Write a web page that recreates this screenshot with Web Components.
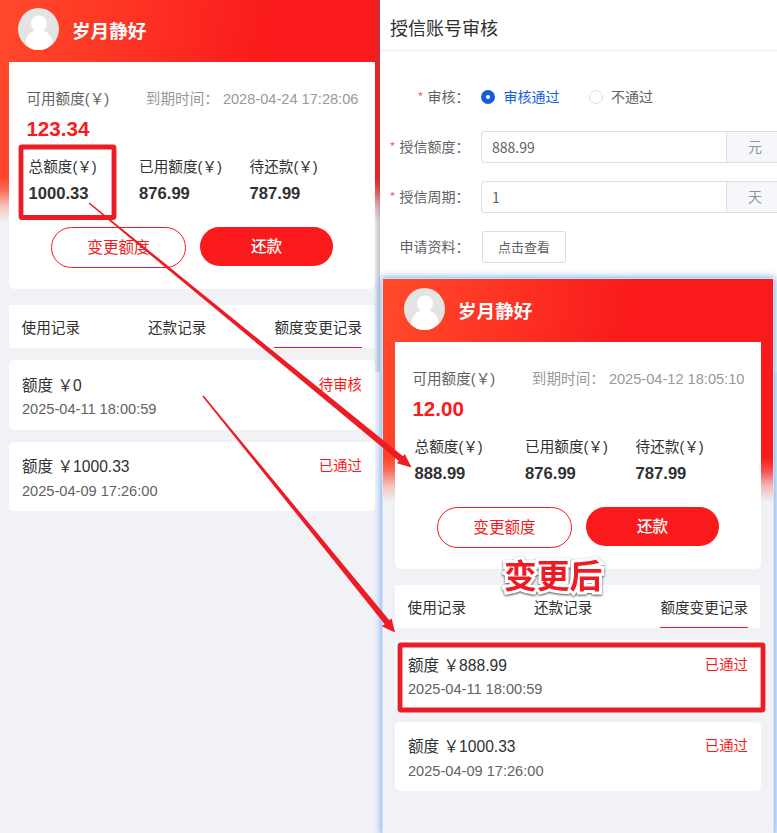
<!DOCTYPE html>
<html lang="zh-CN">
<head>
<meta charset="utf-8">
<title>授信账号审核</title>
<style>
body{margin:0;width:777px;height:833px;overflow:hidden;position:relative;background:#fff;font-family:"Liberation Sans","Noto Sans CJK SC",sans-serif}
</style>
</head>
<body>
<compare-board>
  <credit-phone slot="before" name="岁月静好" available="123.34" expires="2028-04-24 17:28:06" total="1000.33" used="876.99" due="787.99">
    <credit-record latest amount="0" date="2025-04-11 18:00:59" status="待审核"></credit-record>
    <credit-record amount="1000.33" date="2025-04-09 17:26:00" status="已通过"></credit-record>
  </credit-phone>
  <audit-form slot="form">
    <form-row required label="审核&#65306;"><radio-option checked>审核通过</radio-option><radio-option>不通过</radio-option></form-row>
    <form-row required label="授信额度&#65306;"><unit-input unit="元">888.99</unit-input></form-row>
    <form-row required label="授信周期&#65306;"><unit-input unit="天">1</unit-input></form-row>
    <form-row label="申请资料&#65306;"><view-button>点击查看</view-button></form-row>
  </audit-form>
  <credit-phone slot="after" name="岁月静好" available="12.00" expires="2025-04-12 18:05:10" total="888.99" used="876.99" due="787.99">
    <credit-record latest amount="888.99" date="2025-04-11 18:00:59" status="已通过"></credit-record>
    <credit-record amount="1000.33" date="2025-04-09 17:26:00" status="已通过"></credit-record>
  </credit-phone>
</compare-board>
<change-notes>变更后</change-notes>
<script>
const define = (tag, render) => customElements.define(tag, class extends HTMLElement {
  connectedCallback() {
    if (this.shadowRoot) return;
    this.attachShadow({mode: 'open'}).innerHTML = render(n => this.getAttribute(n) || '', this);
  }
});

define('compare-board', () => `<style>
:host{display:block;position:relative;width:777px;height:833px;overflow:hidden}
.base{display:grid;grid-template-columns:380px 397px;height:833px}
.left{overflow:hidden;background:#f1f2f6;position:relative}
.left ::slotted(*){margin:-1px 0 0 -3px}
.shade{position:absolute;right:0;top:0;width:6px;height:372px;background:linear-gradient(90deg,transparent,rgba(90,96,110,.32))}
.right{background:linear-gradient(#fff 0 372px,#e6f1fd 372px)}
.window{position:absolute;left:383px;top:279px;width:390px;height:554px;box-shadow:0 0 0 1px #dce3ee,0 0 7px 2px #75adf5}
</style>
<div class="base"><div class="left"><slot name="before"></slot><div class="shade"></div></div><div class="right"><slot name="form"></slot></div></div>
<div class="window"><slot name="after"></slot></div>`);

define('credit-phone', a => `<style>
:host{display:block;box-sizing:border-box;width:390px;height:834px;padding:0 12px;color:#303133;
background:linear-gradient(180deg,transparent 0 178px,rgba(241,242,246,.22) 191px,rgba(241,242,246,.7) 206px,#f1f2f6 223px),linear-gradient(100deg,#ff4a2a 0,#ff4028 12%,#fa1a1b 52%,#fa1a1b 100%)}
:host([slot=after]){height:554px}
header{display:flex;align-items:flex-start;height:63px;padding-left:9px;gap:13px;color:#fff;font-size:18.6px;font-weight:700;line-height:28px;box-sizing:border-box}
header svg{margin-top:9px;flex:none}
header span{margin-top:19px}
.card{background:#fff;height:227px;border-radius:0 0 6px 6px;font-size:14.6px;box-sizing:border-box;padding-top:27px;line-height:20px}
.top{display:flex;justify-content:space-between;padding:0 16.6px 0 17.4px;color:#606266}
.top span+span{color:#999}
.avail{font-size:20.6px;font-weight:700;color:#fa1a1b;line-height:24px;margin:8px 0 0 17.4px}
.stats{display:grid;grid-template-columns:110.5px 110.5px 1fr;padding-left:19.6px;margin-top:16px;line-height:20px}
.stats b{display:block;font-size:16.6px;line-height:24px;margin-top:5px}
.actions{display:flex;gap:14px;align-items:flex-start;margin:21px 0 0 42px;font-size:15.6px}
.actions div{box-sizing:border-box;text-align:center;border-radius:21px}
.line{width:135px;height:41px;border:1px solid #f21c20;color:#f21c20;line-height:39px}
.fill{width:133px;height:39px;background:#fa1a1b;color:#fff;line-height:39px;font-weight:500}
nav{display:flex;justify-content:space-between;width:365px;box-sizing:border-box;height:43px;background:#fff;margin:16px 0 12px;padding:0 12px 0 12.6px;font-size:14.6px;line-height:46px}
nav span{box-sizing:border-box;height:43px}
nav span:last-child{border-bottom:1px solid #f21c20}
.list{display:flex;flex-direction:column;gap:12px}
</style>
<header><svg width="41" height="42" viewBox="0 0 41 42"><defs><clipPath id="c"><ellipse cx="20.5" cy="21" rx="20.5" ry="21"/></clipPath></defs><g clip-path="url(#c)"><rect width="41" height="42" fill="#e4e4e4"/><circle cx="21" cy="15.5" r="8" fill="#fff"/><path d="M7 42V36C8 27.5 13 22 21 22s13 5.500 14 14v6z" fill="#fff"/></g></svg><span>${a('name')}</span></header>
<div class="card">
<div class="top"><span>可用额度(&#65509;)</span><span>到期时间&#65306; ${a('expires')}</span></div>
<div class="avail">${a('available')}</div>
<div class="stats"><div>总额度(&#65509;)<b>${a('total')}</b></div><div>已用额度(&#65509;)<b>${a('used')}</b></div><div>待还款(&#65509;)<b>${a('due')}</b></div></div>
<div class="actions"><div class="line">变更额度</div><div class="fill">还款</div></div>
</div>
<nav><span>使用记录</span><span>还款记录</span><span>额度变更记录</span></nav>
<div class="list"><slot></slot></div>`);

define('credit-record', a => `<style>
:host{display:flex;justify-content:space-between;box-sizing:border-box;height:69px;background:#fff;border-radius:5px;padding:12px 13px 0;color:#303133}
:host([latest]){height:70px;padding-top:14px}
.t{font-size:15.6px;line-height:25px}
:host([latest]) .t{line-height:23px}
.d{font-size:14.6px;line-height:24px;color:#606266}
.s{font-size:14.4px;line-height:24px;color:#fa1a1b}
:host([latest]) .s{line-height:23px}
</style><div><div class="t">额度 &#65509;${a('amount')}</div><div class="d">${a('date')}</div></div><div class="s">${a('status')}</div>`);

define('audit-form', () => `<style>
:host{display:block;font:14px "Noto Sans CJK SC",sans-serif;color:#606266}
h1{margin:0;height:51px;box-sizing:border-box;border-bottom:1px solid #ececec;padding-left:10px;font-size:18px;font-weight:400;line-height:54px;color:#303133}
.rows{display:grid;gap:18px;padding-top:30px}
</style><h1>授信账号审核</h1><div class="rows"><slot></slot></div>`);

define('form-row', (a, el) => `<style>
:host{display:flex;height:32px;align-items:center}
.l{width:89.500px;text-align:right;margin-right:11.500px;line-height:30px;height:32px;white-space:nowrap;flex:none}
i{font-style:normal;color:#f56c6c;margin-right:4px;font-size:13px}
</style><div class="l">${el.hasAttribute('required') ? '<i>*</i>' : ''}${a('label')}</div><slot></slot>`);

define('radio-option', () => `<style>
:host{display:flex;align-items:center;margin-right:29px;height:32px}
:host([checked]){color:#165dda}
b{width:14px;height:14px;box-sizing:border-box;border:1px solid #dcdfe6;border-radius:50%;margin-right:8.500px}
:host([checked]) b{border:5px solid #165dda}
span{height:32px;line-height:30px}
</style><b></b><span><slot></slot></span>`);

define('unit-input', a => `<style>
:host{display:flex;width:296px;height:32px;box-sizing:border-box;border:1px solid #dcdfe6;border-right:0;border-radius:4px 0 0 4px;line-height:30px}
.v{flex:none;box-sizing:border-box;width:244px;padding-left:10px}
.u{flex:1;box-sizing:border-box;border-left:1px solid #dcdfe6;background:#f5f7fa;padding-left:21px;color:#909399;line-height:29px}
</style><div class="v"><slot></slot></div><div class="u">${a('unit')}</div>`);

define('view-button', () => `<style>
:host{display:block;width:84px;height:32px;margin-left:1px;box-sizing:border-box;border:1px solid #dcdfe6;border-radius:2px;text-align:center;font-size:13px;line-height:29px}
</style><slot></slot>`);

define('change-notes', () => `<style>
:host{position:absolute;inset:0;display:block}
svg{position:absolute;inset:0;overflow:visible}
.cap{position:absolute;left:504px;top:555px;font:700 32.8px/38px "Noto Sans CJK SC",sans-serif;color:#ed1c24;white-space:nowrap;-webkit-text-stroke:6px #fff;stroke-linejoin:round;paint-order:stroke fill;filter:drop-shadow(.5px 1px .8px rgba(0,0,0,.7))}
</style>
<svg width="777" height="833" viewBox="0 0 777 833" fill="#ed1c24">
<rect x="21" y="147" width="93" height="70.5" rx="1" fill="none" stroke="#ed1c24" stroke-width="4.8"/>
<rect x="400" y="645" width="363" height="65" rx="1" fill="none" stroke="#ed1c24" stroke-width="4.8"/>
<path d="M88.5 203.6L89.5 202.4L403 456.2L404.8 454L411.5 467.5L397 463.2L398.8 461Z"/>
<path d="M202.4 396.5L203.6 395.5L389.3 620.3L391.6 618.4L395 632.5L381.8 626.2L384.7 624.2Z"/>
</svg><div class="cap"><slot></slot></div>`);
</script>
</body>
</html>
